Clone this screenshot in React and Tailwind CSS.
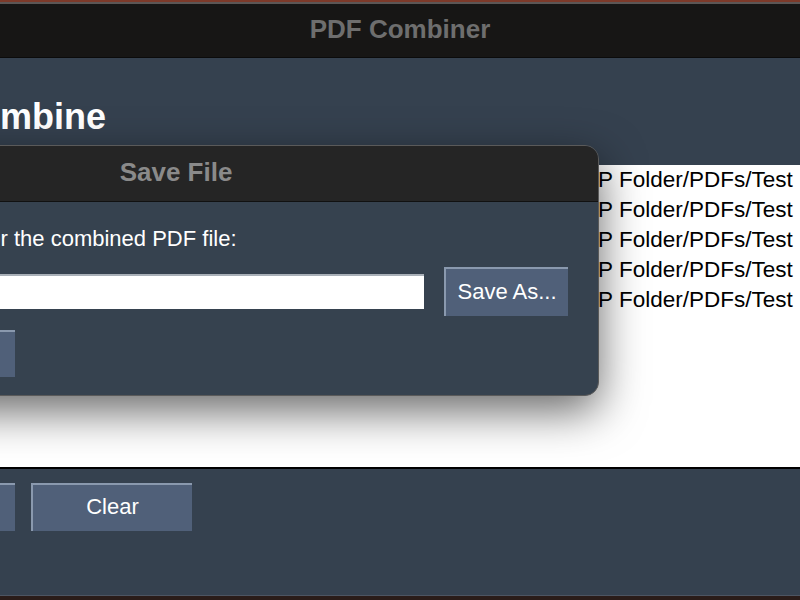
import React from 'react';

const files = [1, 2, 3, 4, 5].map((n) => `/Users/demo/Desktop/TEMP Folder/PDFs/Test\u2002${n}.pdf`);

const Button = ({ children, className = '' }) => (
  <button
    className={`bg-[#506079] border-t-2 border-l-2 border-[#8a99ae] text-white text-[22px] leading-none ${className}`}
  >
    {children}
  </button>
);

const App = () => {
  return (
    <div className="w-[800px] h-[600px] overflow-hidden flex flex-col bg-[#2a1c19] font-['Liberation_Sans',Arial,sans-serif]">
      <div className="h-[2px] bg-[#7d3a2a]" />
      <div className="h-[2px] bg-[#5c5655]" />
      <div className="h-[54px] bg-[#171615] border-b border-[#0b0b0b] flex items-center justify-center pb-[3px]">
        <span className="text-[26px] font-bold text-[#6e6e6e]">PDF Combiner</span>
      </div>

      <div className="flex-1 relative bg-[#35414f]">
        <div className="ml-[-146px] pt-[41px]">
          <h1 className="ml-[98px] text-[36px] leading-[36px] font-bold text-white">Combine</h1>

          <div className="mt-[30px] w-[1000px] h-[304px] bg-white border-b-2 border-black overflow-hidden pl-[474px]">
            {files.map((f, i) => (
              <div key={i} className="text-[22.5px] leading-[30px] text-black whitespace-nowrap">
                {f}
              </div>
            ))}
          </div>

          <div className="mt-[14px] flex gap-4">
            <Button className="w-[161px] h-[48px] pb-[3px]">Remove</Button>
            <Button className="w-[161px] h-[48px] pb-[3px]">Clear</Button>
          </div>
        </div>

        {/* Save dialog */}
        <div className="absolute left-[-247px] top-[87px] w-[846px] h-[251px] rounded-[14px] overflow-hidden border border-[#5a5a5a] bg-[#36424f] shadow-[0_15px_45px_rgba(0,0,0,0.6)]">
          <div className="h-[56px] bg-[#252525] border-b border-[#111] flex items-center justify-center pb-[2px]">
            <span className="text-[26px] font-bold text-[#8a8a8a]">Save File</span>
          </div>
          <div className="pl-[100px] pr-[30px] pt-[24px]">
            <p className="ml-[-10px] text-[22px] leading-[26px] text-white whitespace-nowrap">
              Enter a name for the combined PDF file:
            </p>
            <div className="mt-[15px] flex items-center gap-[20px]">
              <input className="flex-1 h-[35px] bg-white border-t-2 border-[#a9b0b8] outline-none" />
              <Button className="w-[124px] h-[49px] pb-[2px]">Save As...</Button>
            </div>
            <Button className="mt-[14px] w-[161px] h-[47px]">Combine</Button>
          </div>
        </div>
      </div>

      <div className="h-px bg-[#4d5562]" />
      <div className="h-[4px] bg-[#2a1c19]" />
    </div>
  );
};

export default App;
